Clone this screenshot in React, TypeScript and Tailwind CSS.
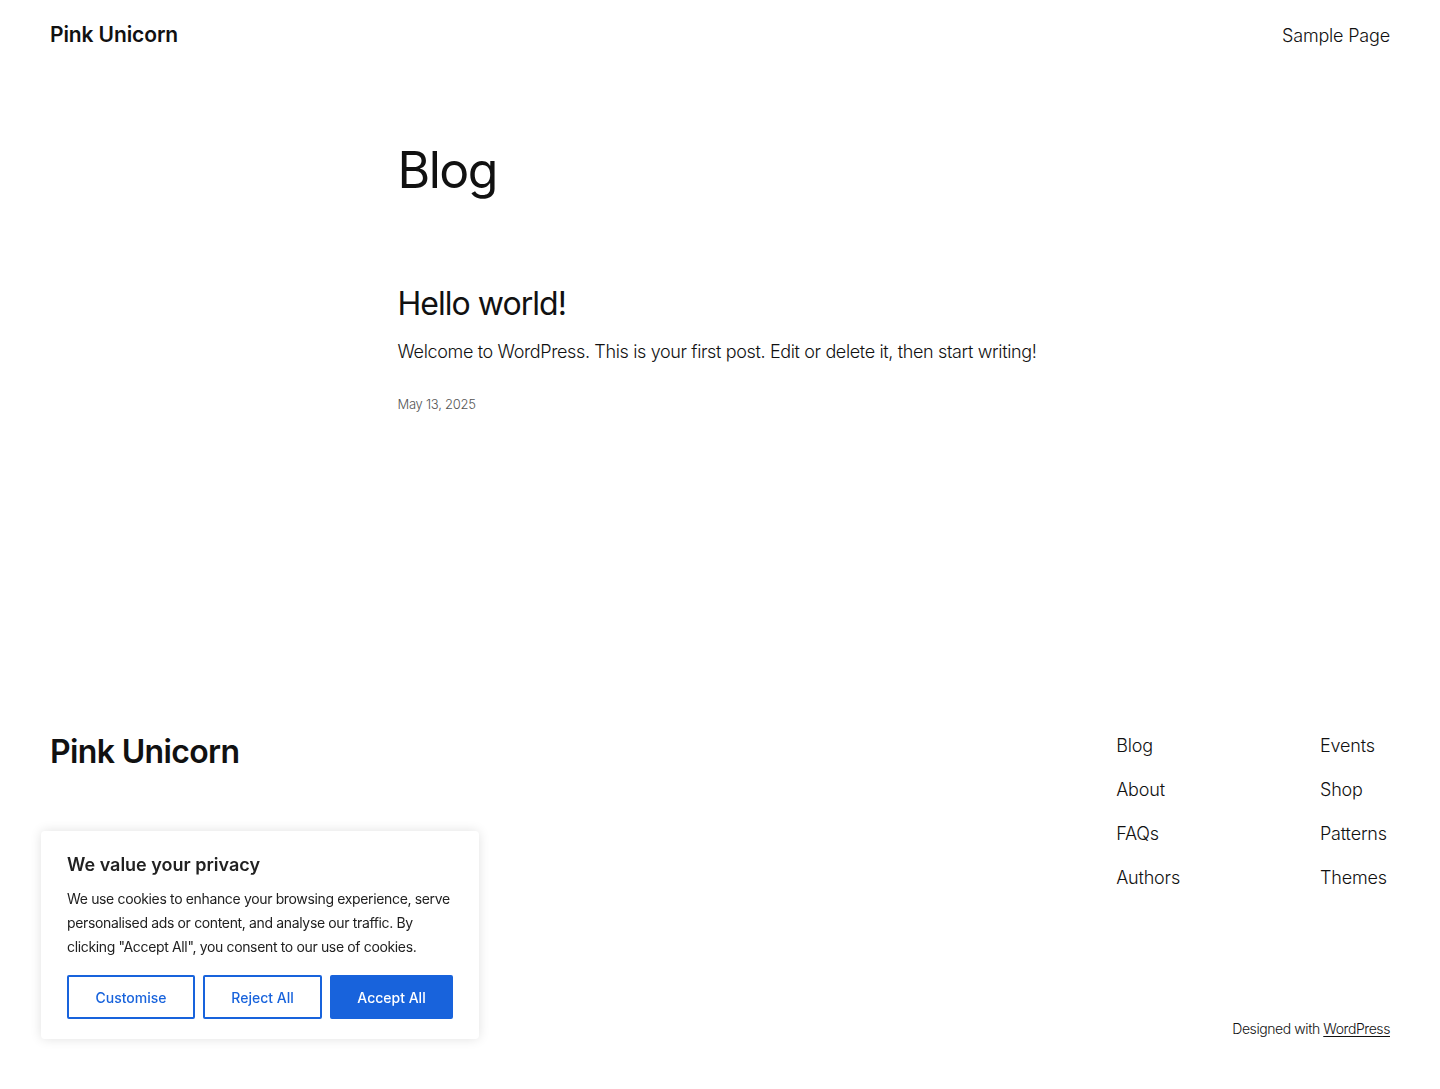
export default function App() {
  const font = { fontFamily: 'Inter, "Noto Sans", sans-serif' };
  const linksA = ['Blog', 'About', 'FAQs', 'Authors'];
  const linksB = ['Events', 'Shop', 'Patterns', 'Themes'];

  return (
    <div className="min-h-screen flex flex-col bg-white text-[#111111] font-['Inter',sans-serif]">
      {/* Header */}
      <header className="flex items-center justify-between px-[50px] h-[70px]">
        <a className="text-[21px] font-semibold tracking-[-0.005em]">Pink Unicorn</a>
        <a className="text-[18px] font-light tracking-[-0.01em]">Sample Page</a>
      </header>

      {/* Main */}
      <main className="flex-1 flex justify-center">
        <div className="w-[645px] pt-[70px]">
          <h1 className="text-[50px] font-normal leading-[1.2] tracking-[-0.03em]">Blog</h1>
          <article className="mt-[85px]">
            <h2 className="text-[32px] font-normal leading-[1.2] tracking-[-0.03em]">Hello world!</h2>
            <p className="mt-[15px] text-[18px] font-light leading-[1.6] tracking-[-0.02em]">
              Welcome to WordPress. This is your first post. Edit or delete it, then start writing!
            </p>
            <p className="mt-[28px] text-[13px] font-light text-[#555555] tracking-[-0.02em]">May 13, 2025</p>
          </article>
        </div>
      </main>

      {/* Footer */}
      <footer className="px-[50px] pb-[50px]">
        <div className="flex justify-between">
          <div className="text-[32px] font-semibold tracking-[-0.02em] leading-none mt-[2px]">Pink Unicorn</div>
          <div className="flex gap-[140px]">
            <ul className="flex flex-col gap-[20px] text-[18px] font-light tracking-[-0.01em]">
              {linksA.map((l) => (
                <li key={l} className="leading-[24px]">{l}</li>
              ))}
            </ul>
            <ul className="w-[70px] flex flex-col gap-[20px] text-[18px] font-light tracking-[-0.01em]">
              {linksB.map((l) => (
                <li key={l} className="leading-[24px] whitespace-nowrap">{l}</li>
              ))}
            </ul>
          </div>
        </div>
        <div className="flex justify-end mt-[128px] text-[14px] font-light tracking-[-0.03em]">
          <span>
            Designed with <a className="underline underline-offset-2">WordPress</a>
          </span>
        </div>
      </footer>

      {/* Cookie banner */}
      <div
        style={font}
        className="fixed left-[41px] bottom-[50px] w-[438px] bg-white rounded-[4px] shadow-[0_0_12px_rgba(0,0,0,0.12)] px-[26px] pt-[22px] pb-[20px]"
      >
        <h3 className="text-[18px] font-semibold text-[#212121] leading-[24px]">We value your privacy</h3>
        <p className="mt-[10px] text-[14px] leading-[24px] text-[#212121] tracking-[-0.025em]">
          We use cookies to enhance your browsing experience, serve personalised ads or content, and analyse our traffic. By clicking "Accept All", you consent to our use of cookies.
        </p>
        <div className="mt-[16px] flex gap-[8px]">
          <button className="w-[128px] h-[44px] border-2 border-[#1863dc] rounded-[2px] text-[14px] font-medium text-[#1863dc]">
            Customise
          </button>
          <button className="w-[119px] h-[44px] border-2 border-[#1863dc] rounded-[2px] text-[14px] font-medium text-[#1863dc]">
            Reject All
          </button>
          <button className="w-[123px] h-[44px] bg-[#1863dc] border-2 border-[#1863dc] rounded-[2px] text-[14px] font-medium text-white">
            Accept All
          </button>
        </div>
      </div>
    </div>
  );
}
